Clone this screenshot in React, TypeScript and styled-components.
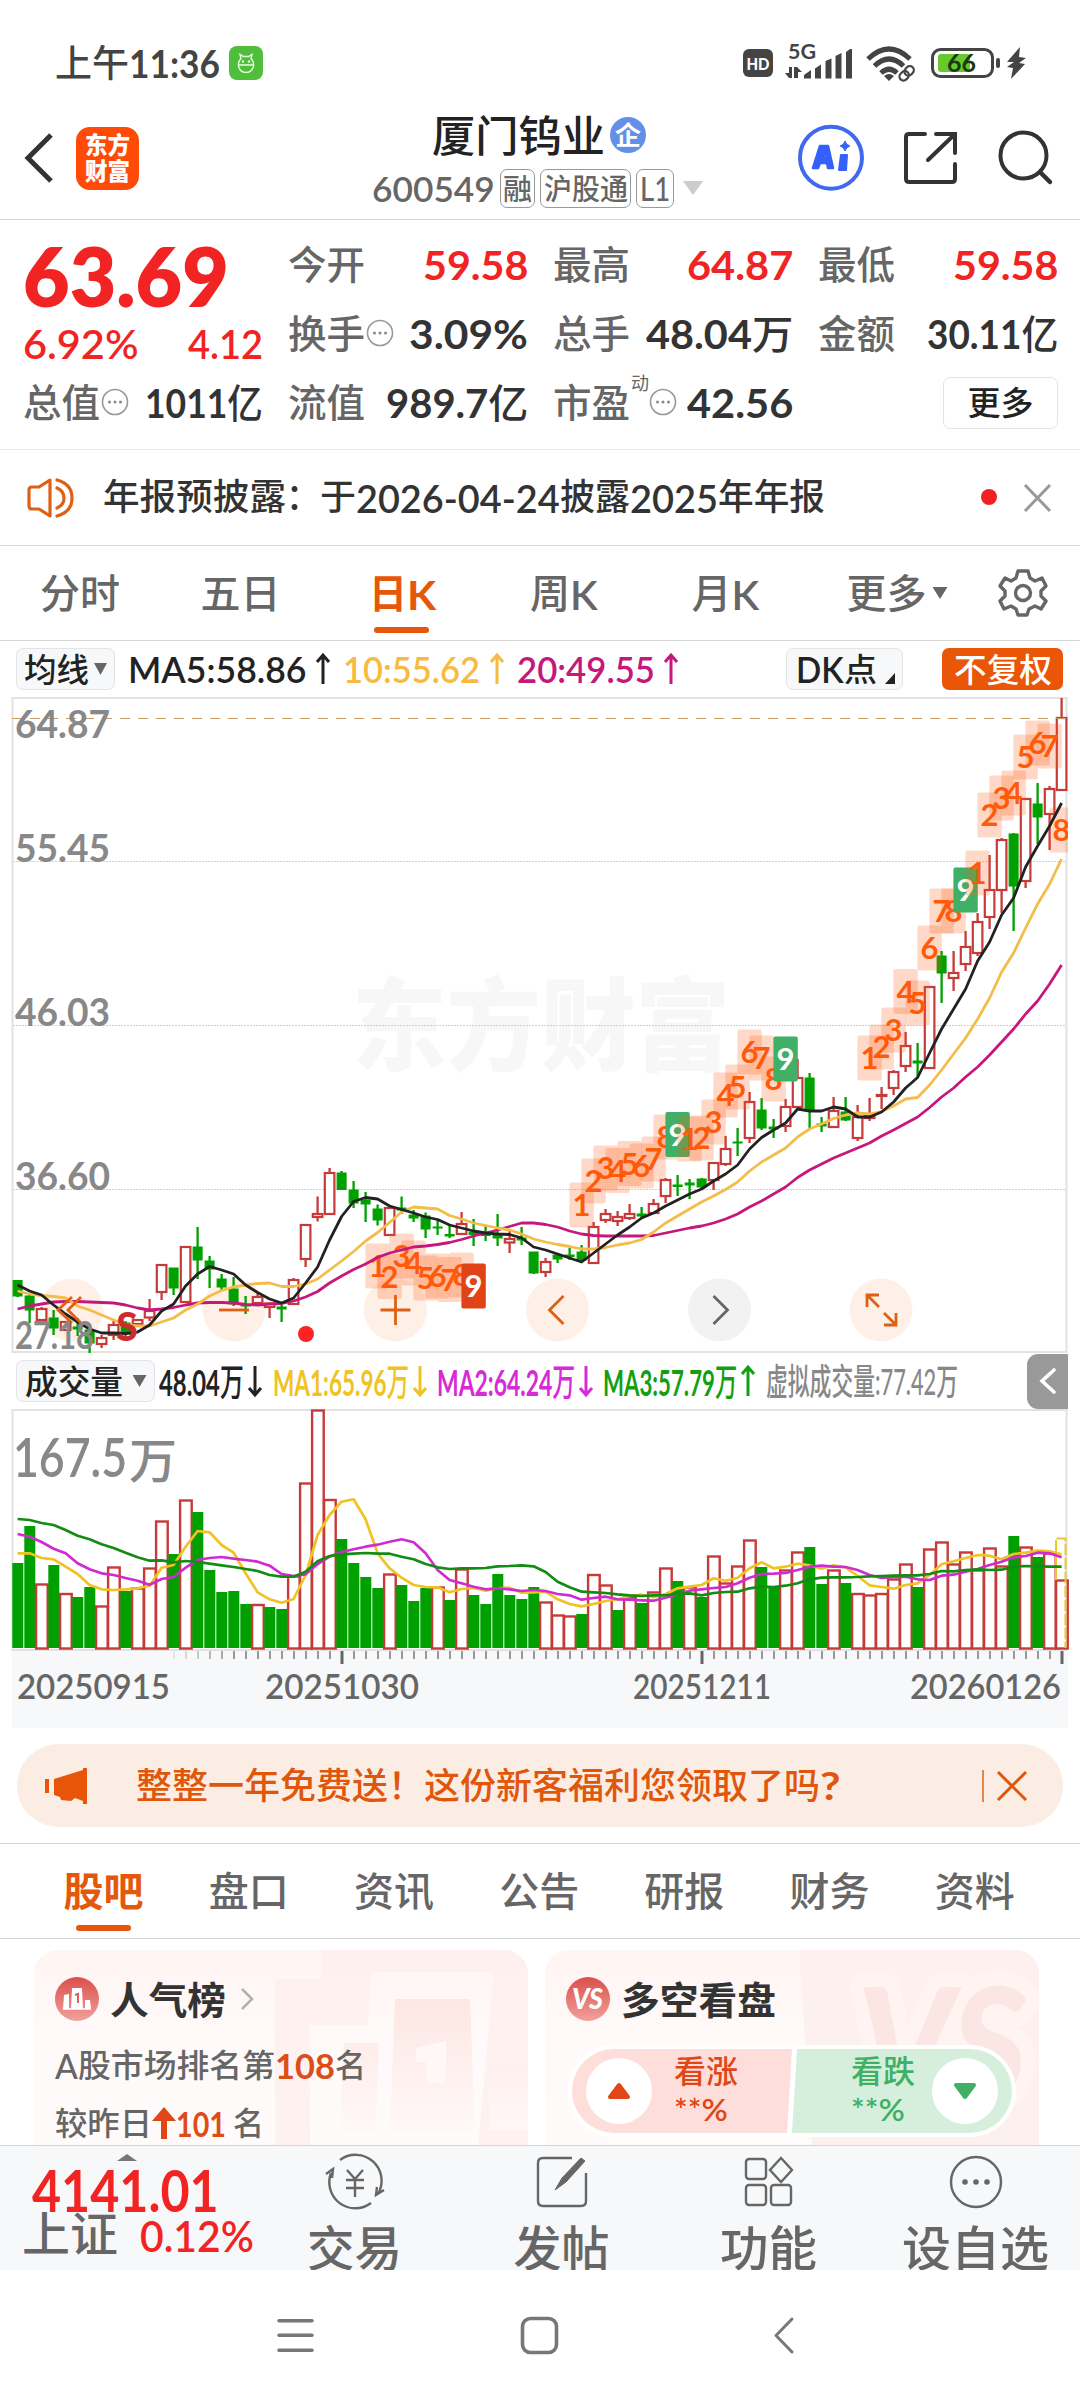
import React, { useLayoutEffect, useRef, useState } from "react";
import styled, { createGlobalStyle } from "styled-components";

const SANS = `Lato, "Noto Sans CJK SC", sans-serif`;

const Global = createGlobalStyle`
  * { box-sizing: border-box; }
  body { margin: 0; background: #fff; font-family: ${SANS}; color: #333; }
  svg { display: block; flex: none; }
`;

/* ---------- text squeezed into a fixed width ---------- */

const FitBox = styled.span<{ $w: number; $size: number; $color?: string; $weight?: number; $y?: number }>`
  display: block;
  flex: none;
  width: ${(p) => p.$w}px;
  height: ${(p) => p.$size}px;
  line-height: ${(p) => p.$size}px;
  font-size: ${(p) => p.$size}px;
  font-weight: ${(p) => p.$weight ?? 500};
  color: ${(p) => p.$color ?? "#333"};
  white-space: nowrap;
  margin-top: ${(p) => p.$y ?? 0}px;
`;
const FitInner = styled.span`
  display: inline-block;
  transform-origin: 0 50%;
`;
const Unit = styled.span`
  font-weight: 500;
`;

type FitProps = { w: number; size: number; color?: string; weight?: number; y?: number; children: React.ReactNode };
function Fit({ w, size, color, weight, y, children }: FitProps) {
  const ref = useRef<HTMLSpanElement>(null);
  const [k, setK] = useState(1);
  useLayoutEffect(() => {
    if (ref.current) setK(w / ref.current.offsetWidth);
  }, [w, size, weight]);
  return (
    <FitBox $w={w} $size={size} $color={color} $weight={weight} $y={y}>
      <FitInner ref={ref} style={{ transform: `scaleX(${k})` }}>
        {children}
      </FitInner>
    </FitBox>
  );
}

/* ---------- page skeleton ---------- */

const Page = styled.main`
  width: 1080px;
  height: 2400px;
  overflow: hidden;
  display: flex;
  flex-direction: column;
  background: #fff;
`;
const Row = styled.div<{ $h: number; $pl?: number; $line?: string }>`
  display: flex;
  align-items: center;
  flex: none;
  height: ${(p) => p.$h}px;
  padding-left: ${(p) => p.$pl ?? 0}px;
  border-bottom: ${(p) => (p.$line ? `1px solid ${p.$line}` : "none")};
`;
const TopRuledRow = styled(Row)`
  border-top: 1px solid #d4d4d4;
`;
const Gap = styled.i<{ $w: number }>`
  flex: none;
  width: ${(p) => p.$w}px;
`;

/* ---------- status bar ---------- */

const StatusBar = styled(Row)`
  padding-top: 26px;
`;

function StatusIcons() {
  return (
    <svg width="292" height="44" viewBox="738 41 292 44" fill="#444">
      <rect x="743" y="49" width="30" height="28" rx="6" />
      <text x="746.5" y="69.5" fontSize="17" fontWeight="900" fill="#fff" textLength="23" lengthAdjust="spacingAndGlyphs">HD</text>
      <text x="788" y="58.5" fontSize="20" fontWeight="700" textLength="28" lengthAdjust="spacingAndGlyphs">5G</text>
      <path d="M789 67h3v11h-3l-4-5h4zM794 78V67h3l5 5h-4v6z" />
      <path d="M804 78.500v-3.500l7-5v8.500zM815 78.500V68.500l6-4v14zM825.500 78.500V61l6-2.500v20zM835.500 78.500V56l6-3v25.500zM846 78.500V52l4-3h2v29.500z" />
      <g fill="none" stroke="#444" strokeWidth="5">
        <path d="M868 59q21-20 42 0M874.500 66q14.500-14 29 0M881 73q8-7.500 16 0" />
      </g>
      <path d="M884 76q5-4 10 0l-5 5z" />
      <g fill="none" stroke="#444" strokeWidth="2.200" transform="rotate(-45 907 73)">
        <rect x="898" y="69" width="10" height="8" rx="4" />
        <rect x="905" y="69" width="10" height="8" rx="4" />
      </g>
      <rect x="932.500" y="49.500" width="60" height="27" rx="8" fill="#fff" stroke="#444" strokeWidth="3" />
      <rect x="938" y="54" width="32" height="18" rx="3" fill="#67c92c" />
      <text x="947" y="72" fontSize="24" fontWeight="700" fill="#1c3a10" textLength="29" lengthAdjust="spacingAndGlyphs">66</text>
      <rect x="996" y="58" width="4" height="10" rx="2" />
      <path d="M1020 47l-13 15h7l-7 5 6 1-2 11 14-15-6-1 7-5-7-1z" />
    </svg>
  );
}

function Mascot() {
  return (
    <svg width="34" height="34" viewBox="0 0 34 34">
      <rect width="34" height="34" rx="8" fill="#4fbe3a" />
      <g fill="none" stroke="#e9ffe2" strokeWidth="1.400">
        <path d="M12 12.500l-1-4 3.500 2h5l3.500-2-1 4q3 3 2.500 8-2 6-7.500 6t-7.500-6q-.5-5 2.500-8zM9.500 19h15" />
      </g>
      <g fill="#e9ffe2"><circle cx="14" cy="15.500" r="1.200" /><circle cx="20" cy="15.500" r="1.200" /></g>
    </svg>
  );
}

/* ---------- title bar ---------- */

const TitleBar = styled(Row)`
  align-items: flex-start;
`;
const Side = styled.div`
  display: flex;
  align-items: center;
  height: 116px;
`;
const Logo = styled.div`
  flex: none;
  width: 63px;
  height: 63px;
  border-radius: 14px;
  background: #ff4a08;
  display: flex;
  flex-direction: column;
  align-items: center;
  justify-content: center;
  gap: 2px;
`;
const TitleBlock = styled.div`
  flex: none;
  width: 340px;
`;
const TitleLine = styled.div<{ $pl: number; $h: number }>`
  display: flex;
  align-items: center;
  height: ${(p) => p.$h}px;
  padding-left: ${(p) => p.$pl}px;
`;
const Verified = styled.div`
  display: grid;
  place-items: center;
  width: 36px;
  height: 36px;
  margin-left: 5px;
  border-radius: 50%;
  background: #6390e6;
`;
const Tag = styled.div<{ $w: number; $ml: number }>`
  display: flex;
  align-items: center;
  justify-content: center;
  width: ${(p) => p.$w}px;
  height: 39px;
  margin-left: ${(p) => p.$ml}px;
  border: 1.5px solid #999;
  border-radius: 7px;
`;
const Down = styled.i<{ $w: number; $h: number; $c: string }>`
  flex: none;
  width: ${(p) => p.$w}px;
  height: ${(p) => p.$h}px;
  background: ${(p) => p.$c};
  clip-path: polygon(0 0, 100% 0, 50% 100%);
`;

function HeaderIcons() {
  return (
    <svg width="262" height="70" viewBox="796 123 262 70" fill="none" stroke="#333" strokeWidth="4">
      <circle cx="831" cy="157.700" r="31" stroke="#4169ef" />
      <g stroke="#3461fb" fill="#3461fb" strokeLinejoin="round">
        <path d="M813 168l7-22h8l5 22h-5l-1-5h-7l-2 5zM822 158h4l-1-6z" strokeWidth="2.500" fillRule="evenodd" />
        <path d="M841 155h6l-1 15h-7z" strokeWidth="2" />
        <path d="M845 141q1 4 5 5-4 1-5 5-1-4-5-5 4-1 5-5z" strokeWidth="1" />
      </g>
      <path d="M925 134h-16q-3 0-3 3v42q0 3 3 3h43q3 0 3-3v-15M936 134h19v19M955 134l-27 26" strokeLinecap="round" />
      <circle cx="1023.500" cy="155.500" r="23" />
      <path d="M1040 172l10 10" strokeWidth="4.500" strokeLinecap="round" />
    </svg>
  );
}

/* ---------- quote block ---------- */

const QuoteGrid = styled.section`
  flex: none;
  height: 230px;
  padding: 10px 22px 0 23px;
  display: grid;
  grid-template-columns: repeat(4, 240px);
  grid-template-rows: repeat(3, 69px);
  column-gap: 25px;
  border-bottom: 1px solid #ebebeb;
`;
const Cell = styled.div`
  display: flex;
  align-items: center;
  justify-content: space-between;
`;
const Label = styled.div`
  display: flex;
  align-items: center;
  gap: 1px;
`;
const PriceCell = styled.div`
  grid-row: span 2;
  padding-top: 4px;
`;
const PriceSub = styled.div`
  display: flex;
  justify-content: space-between;
  margin-top: 8px;
`;
const MoreButton = styled.div`
  display: grid;
  place-items: center;
  width: 115px;
  height: 52px;
  margin-left: auto;
  border: 1.5px solid #e4e4e6;
  border-radius: 7px;
`;
const SupMark = styled.span`
  font-size: 18px;
  color: #666;
  align-self: flex-start;
  line-height: 18px;
  margin: -9px -1px 0 0;
`;
const Dots = () => (
  <svg width="28" height="30" viewBox="0 0 28 30">
    <circle cx="14" cy="14" r="12.500" fill="none" stroke="#999" strokeWidth="1.600" />
    <g fill="#888"><circle cx="8.500" cy="14" r="1.500" /><circle cx="14" cy="14" r="1.500" /><circle cx="19.500" cy="14" r="1.500" /></g>
  </svg>
);

const RED = "#f12323";

function Stat({ name, value, unit, w, color, dots, sup }: { name: string; value: string; unit?: string; w: number; color?: string; dots?: boolean; sup?: string }) {
  return (
    <Cell>
      <Label>
        <Fit w={77} size={39} color="#666">{name}</Fit>
        {sup && <SupMark>{sup}</SupMark>}
        {dots && <Dots />}
      </Label>
      <Fit w={w} size={40} color={color} weight={700}>{value}{unit && <Unit>{unit}</Unit>}</Fit>
    </Cell>
  );
}

/* ---------- tabs ---------- */

const TabItem = styled.div<{ $w: number; $gap?: number }>`
  position: relative;
  flex: none;
  width: ${(p) => p.$w}px;
  height: 100%;
  display: flex;
  align-items: center;
  justify-content: center;
  gap: ${(p) => p.$gap ?? 0}px;
`;
const Underline = styled.i`
  position: absolute;
  left: 50%;
  bottom: 7px;
  width: 55px;
  height: 6px;
  margin-left: -28px;
  border-radius: 3px;
  background: #e5580b;
`;

const Gear = () => (
  <svg width="50" height="50" viewBox="-25 -25 50 50" fill="none" stroke="#666" strokeWidth="3.400" strokeLinejoin="round">
    <path d="M-5-22H5L7-15 12-12 19-15 23-7 18-2V3L23 8 18 16 12 13 6 16 4 22H-5L-7 16-12 13-19 16-23 8-18 3V-2L-23-7-18-15-12-12-7-15Z" />
    <circle r="7.500" />
  </svg>
);

/* ---------- chart legends ---------- */

const Chip = styled.div<{ $w: number; $solid?: boolean; $gap?: number }>`
  flex: none;
  display: flex;
  align-items: center;
  justify-content: center;
  gap: ${(p) => p.$gap ?? 5}px;
  width: ${(p) => p.$w}px;
  height: 42px;
  border-radius: 7px;
  border: ${(p) => (p.$solid ? "none" : "1.5px solid #e2e4e8")};
  background: ${(p) => (p.$solid ? "#e95607" : "#f7f8fa")};
`;
const Corner = styled.i`
  align-self: flex-end;
  width: 10px;
  height: 11px;
  margin: 0 -2px 5px 8px;
  background: #222;
  clip-path: polygon(100% 0, 100% 100%, 0 100%);
`;
const CollapseTab = styled.div`
  display: grid;
  place-items: center;
  width: 41px;
  height: 55px;
  margin-left: auto;
  border-radius: 11px 0 0 11px;
  background: #999;
`;
const Arrow = ({ color, down }: { color: string; down?: boolean }) => (
  <svg width="16" height="34" viewBox="0 0 16 34" fill="none" stroke={color} strokeWidth="3">
    <path d={down ? "M8 2V31M2 24l6 7 6-7" : "M8 32V3M2 10l6-7 6 7"} />
  </svg>
);

/* ---------- chart data ---------- */

const X = (i: number) => 17.6 + 12 * i;
const UP = "#c63a3a";
const DN = "#00a000";

// direction, body top, body bottom, high, low
type Candle = [0 | 1, number, number, number, number];
const CANDLES: Candle[] = [
  [0, 1280.5, 1296, 1280, 1297], [0, 1296, 1310, 1295, 1323], [1, 1309, 1320, 1307, 1323], [0, 1318, 1328, 1310, 1335],
  [1, 1322, 1330, 1322, 1330], [0, 1327, 1329, 1318, 1336], [0, 1330, 1343, 1326, 1353], [1, 1338, 1344, 1335, 1348],
  [1, 1325, 1335, 1321, 1340], [0, 1323, 1334, 1321, 1336], [1, 1320, 1324, 1319, 1326], [1, 1311, 1317.5, 1299, 1321],
  [1, 1265, 1292, 1265, 1300], [0, 1268, 1288, 1268, 1295], [1, 1247, 1302, 1247, 1303], [0, 1247, 1260, 1227, 1279],
  [0, 1261, 1269, 1256, 1288], [0, 1279, 1287, 1274, 1290], [0, 1289, 1304, 1277, 1306], [0, 1305, 1306, 1296, 1314],
  [1, 1297, 1303, 1292, 1305], [1, 1303.5, 1307, 1303, 1318], [0, 1307, 1309, 1304, 1322], [1, 1280, 1304, 1278, 1304],
  [1, 1225, 1259, 1225, 1267], [1, 1214, 1217, 1196.5, 1221.5], [1, 1173, 1214, 1168, 1214], [0, 1173, 1189.5, 1171, 1189],
  [0, 1190, 1203, 1181, 1208], [0, 1200, 1204, 1192, 1222], [0, 1209, 1220, 1204.5, 1225.5], [1, 1208, 1235, 1208, 1235],
  [0, 1208, 1210, 1196.5, 1214], [0, 1215, 1218, 1210, 1222], [0, 1216, 1229, 1212.5, 1238], [0, 1227, 1228, 1220, 1235],
  [0, 1234.5, 1236, 1225.5, 1238], [1, 1224, 1234, 1212, 1234], [0, 1232, 1234.5, 1219, 1246], [0, 1233.5, 1235.5, 1225.5, 1241],
  [0, 1233.5, 1238, 1214, 1246], [1, 1239, 1242.5, 1230, 1253], [0, 1238, 1240, 1227, 1245], [0, 1252, 1273, 1252, 1274],
  [1, 1262, 1272, 1258, 1277], [0, 1255, 1259, 1253, 1263], [0, 1255, 1256.5, 1248, 1260], [0, 1252, 1260, 1245, 1262],
  [1, 1227, 1263, 1222, 1264], [1, 1214, 1220, 1209, 1223], [1, 1217, 1221, 1211, 1226], [1, 1214, 1218, 1204, 1220],
  [0, 1214, 1216, 1207, 1218], [1, 1204, 1213, 1199, 1214], [1, 1180, 1196, 1178, 1203], [0, 1185, 1186.5, 1175, 1196],
  [0, 1183, 1185, 1179, 1199], [0, 1179, 1187, 1178, 1190], [1, 1163, 1180, 1162, 1190], [1, 1149, 1164, 1136, 1166],
  [0, 1142, 1143, 1128, 1156], [1, 1102, 1138, 1092, 1143], [0, 1110, 1128, 1098, 1130], [0, 1127, 1129, 1119, 1138],
  [1, 1107, 1126, 1099, 1132], [1, 1078, 1107, 1059, 1108], [0, 1078, 1110, 1073, 1130], [0, 1124, 1126, 1117, 1132],
  [1, 1111, 1127, 1097, 1127], [0, 1112, 1120, 1097, 1121], [1, 1117, 1138, 1105, 1141], [1, 1116, 1118, 1098, 1121],
  [1, 1095, 1096, 1087, 1109], [1, 1072, 1088, 1070, 1095], [1, 1046, 1066, 1032, 1072], [0, 1061, 1063, 1043, 1077],
  [1, 987, 1068, 987, 1068], [0, 956, 973, 951, 1003], [1, 973, 978, 951, 991], [1, 947, 964, 931, 971],
  [1, 922, 953, 913, 956], [1, 890, 917, 855, 929], [1, 840, 890, 838, 913], [0, 834, 886, 833, 931],
  [1, 799, 881, 798, 888], [0, 804, 817, 783, 844], [1, 789, 814, 786, 850], [1, 718, 790, 698, 790],
];

const MA5 = [1285, 1291, 1295, 1305, 1314, 1322, 1329, 1333, 1333, 1333.5, 1332, 1325, 1311, 1304, 1286, 1274, 1266.5, 1270, 1274, 1285, 1292.5, 1299, 1303, 1298, 1283, 1267, 1240, 1216.5, 1201.5, 1197.5, 1199, 1206, 1209.5, 1213, 1217, 1219.5, 1225, 1228, 1231, 1233, 1234, 1234.5, 1238, 1247, 1250, 1254, 1258, 1262, 1253, 1244, 1235, 1227, 1218, 1213, 1206, 1200, 1194, 1189, 1181, 1174, 1165, 1149, 1137.5, 1130, 1123, 1109, 1111, 1111, 1107, 1109, 1117, 1117, 1112, 1102, 1088, 1077.5, 1053, 1029, 1009, 989, 961, 942, 915, 898, 867, 846, 826, 803];
const MA10 = [1291, 1294, 1295.5, 1296.5, 1298, 1306, 1310, 1315, 1320, 1325, 1326, 1326, 1322, 1318, 1310, 1304, 1296, 1290.5, 1287, 1285, 1283.5, 1283, 1286.5, 1286.5, 1284, 1279, 1270, 1261, 1251.5, 1241, 1232.5, 1222.5, 1212, 1207, 1208, 1209, 1215.5, 1219, 1223, 1225.5, 1228, 1230, 1234, 1239, 1242, 1244.5, 1246.5, 1249, 1249, 1247.5, 1245, 1243, 1239.5, 1232, 1223, 1216, 1209, 1202, 1196, 1189.5, 1182, 1171, 1162, 1155, 1148, 1137, 1129, 1124, 1118.5, 1115, 1113, 1114, 1111.5, 1106, 1099, 1097.5, 1085, 1070, 1054, 1038, 1019, 998, 972, 953, 928, 904, 884, 859];
const MA20 = [1309, 1306, 1304, 1302, 1301.5, 1301.5, 1302, 1302.5, 1303, 1305, 1308, 1310, 1309, 1307.5, 1305, 1303, 1302.5, 1302.5, 1303, 1304.5, 1305, 1304, 1303.5, 1301, 1297, 1291.5, 1283, 1276, 1269.5, 1264, 1257.5, 1253, 1250, 1247, 1246, 1244.5, 1242.5, 1239.5, 1236, 1233, 1230, 1226.5, 1223, 1223, 1224.5, 1227, 1231, 1234, 1235.5, 1236, 1236, 1236, 1236, 1235.5, 1233, 1230.5, 1228, 1226, 1223, 1219, 1214, 1207, 1201, 1194, 1187, 1177.5, 1170, 1164, 1158, 1153, 1148, 1143, 1136, 1130, 1123.5, 1117, 1107.5, 1097, 1088, 1077, 1067, 1055, 1042, 1029, 1014, 1001, 984, 965];

// candle index, centre height, count; the ninth is a filled flag
const COUNTS: [number, number, number, string?][] = [
  [30, 1266, 1], [31, 1276.5, 2], [32, 1256, 3], [33, 1263, 4], [34, 1278, 5], [35, 1276, 6], [36, 1279.5, 7], [37, 1275, 8], [38, 1286, 9, "#e04416"],
  [47, 1205, 1], [48, 1181, 2], [49, 1168, 3], [50, 1170.5, 4], [51, 1163.5, 5], [52, 1166, 6], [53, 1159, 7], [54, 1137, 8], [55, 1134.5, 9, "#3fb065"],
  [56, 1139, 1], [57, 1138, 2], [58, 1122, 3], [59, 1095, 4], [60, 1087, 5], [61, 1052, 6], [62, 1058, 7], [63, 1079, 8], [64, 1059, 9, "#3fb065"],
  [71, 1058, 1], [72, 1047, 2], [73, 1030, 3], [74, 991.5, 4], [75, 1003, 5], [76, 948, 6], [77, 911, 7], [78, 911, 8], [79, 890, 9, "#3fb065"],
  [80, 873, 1], [81, 815, 2], [82, 798, 3], [83, 793, 4], [84, 757, 5], [85, 743, 6], [86, 746, 7], [87, 830, 8],
];

const VOL = [1563, 1526, 1584, 1565, 1593.5, 1597, 1587, 1606, 1567, 1591, 1588, 1568, 1521, 1554, 1500, 1512, 1570, 1592, 1591, 1604, 1604.5, 1607, 1609, 1576, 1483, 1410, 1499.5, 1539, 1563, 1577, 1588, 1574, 1585, 1601, 1588, 1587, 1600, 1569, 1595, 1604, 1574, 1595, 1599, 1587, 1602, 1615, 1616, 1614, 1574.5, 1585, 1610, 1597, 1603, 1592, 1568, 1581, 1587, 1597, 1556, 1583, 1566, 1540, 1567, 1586, 1570, 1552, 1547, 1584, 1570, 1583, 1593.5, 1595, 1593.5, 1579, 1564, 1587, 1549, 1542, 1564, 1552, 1570, 1548, 1566, 1536, 1547, 1557, 1553, 1580];
const VOL_UP = new Set([2, 4, 7, 8, 10, 11, 12, 14, 20, 23, 24, 25, 26, 31, 35, 37, 44, 45, 46, 48, 49, 51, 53, 54, 56, 58, 59, 60, 61, 64, 65, 68, 70, 71, 72, 73, 74, 76, 77, 78, 79, 80, 81, 82, 84, 86, 87]);

// volume averages, in thirds of a pixel below y = 1340
const V1 = [640, 640, 654, 658, 680, 702, 735, 748, 750, 748, 745, 737, 683, 675, 620, 573, 577, 615, 638, 700, 757, 778, 788, 777, 705, 585, 525, 485, 478, 538, 640, 685, 713, 735, 741, 742, 757, 747, 744, 752, 745, 743, 758, 757, 755, 778, 792, 799, 792, 783, 778, 768, 764, 772, 762, 745, 740, 735, 715, 722, 713, 685, 667, 685, 680, 671, 676, 686, 676, 682, 708, 736, 741, 746, 735, 730, 705, 673, 664, 654, 645, 647, 658, 642, 638, 632, 634, 643];
const V2 = [582, 590, 606, 626, 640, 670, 688, 700, 705, 714, 722, 734, 717, 711, 683, 660, 654, 651, 656, 660, 665, 677, 702, 708, 703, 672, 650, 636, 628, 620, 614, 605, 598, 607, 640, 690, 720, 730, 740, 748, 745, 748, 753, 750, 753, 762, 766, 779, 774, 770, 778, 779, 781, 782, 773, 763, 752, 748, 744, 741, 730, 713, 702, 701, 699, 690, 680, 677, 680, 681, 690, 705, 714, 711, 710, 718, 720, 707, 704, 695, 687, 675, 665, 652, 648, 638, 640, 652];
const V3 = [537, 540, 549, 555, 570, 587, 598, 613, 624, 638, 652, 662, 661, 667, 663, 666, 671, 676, 681, 687, 693, 705, 710, 710, 695, 664, 648, 643, 641, 639, 641, 641, 650, 658, 672, 682, 687, 685, 685, 684, 679, 678, 676, 679, 696, 725, 742, 755, 757, 759, 763, 766, 768, 766, 766, 761, 760, 766, 759, 756, 755, 745, 740, 741, 737, 730, 718, 713, 712, 712, 711, 709, 708, 707, 706, 706, 702, 693, 694, 690, 688, 690, 689, 680, 678, 679, 680, 680];

const pts = (ys: number[]) => ys.map((y, i) => `${X(i).toFixed(1)},${y}`).join(" ");
const vpts = (ys: number[]) => pts(ys.map((v) => +(1340 + v / 3).toFixed(1)));

const PRICES: [string, number][] = [["64.87", 737.5], ["55.45", 862], ["46.03", 1026], ["36.60", 1189.5], ["27.18", 1349]];
const BUTTONS: [number, string, string, string][] = [
  [72, "#fff0e7", "#dd6014", "M0-13-14 0 0 13M9-13-4 0 9 13"],
  [234, "#fff0e7", "#dd6014", "M-15 0H15"],
  [395.500, "#fff0e7", "#dd6014", "M-15 0H15M0-15V15"],
  [557.500, "#fff0e7", "#dd6014", "M6-14-8 0 6 14"],
  [719.500, "#f2f2f2", "#666", "M-6-14 8 0-6 14"],
  [881, "#fff0e7", "#dd6014", "M-2-3-14-15M-14-3V-15H-2M3 3 15 15M15 3V15H3"],
];

function PriceChart() {
  return (
    <svg width="1080" height="656" viewBox="0 697 1080 656" fontFamily={SANS}>
      <path d="M12.500 1352V698H1066.500V1352Z" fill="none" stroke="#e2e2e2" strokeWidth="2" />
      <text x="352" y="1063" fontSize="101" fontWeight="900" fill="#f7f7f7" textLength="378" lengthAdjust="spacingAndGlyphs">东方财富</text>
      {[861, 1025, 1189].map((y) => (
        <path key={y} d={`M13 ${y}.5H1066`} stroke="#d0d0d0" strokeDasharray="2 1" strokeWidth="1" />
      ))}
      {BUTTONS.map(([x, bg]) => <circle key={x} cx={x} cy="1310" r="31.500" fill={bg} />)}
      {CANDLES.map(([up, t, b, h, l], i) => {
        const c = up ? UP : DN;
        const x = X(i);
        return (
          <g key={i} stroke={c} strokeWidth="2.300">
            <path d={`M${x} ${h}V${t}M${x} ${b}V${l}`} />
            <rect x={x - (up ? 4.8 : 4.5)} y={t} width={up ? 9.6 : 9} height={Math.max(b - t, 0.5)} fill={up ? "#fff" : DN} strokeWidth={up ? 2.2 : 1} />
          </g>
        );
      })}
      <path d="M12 718.500H1066" stroke="#c59a66" strokeWidth="1.200" strokeDasharray="10 8" />
      <clipPath id="plot"><rect x="12" y="697" width="1056" height="656" /></clipPath>
      <g clipPath="url(#plot)" fontSize="31" fontWeight="700" textAnchor="middle">
        {COUNTS.map(([i, y, n, flag]) => (
          <g key={i}>
            <rect x={X(i) - 12.2} y={y - 22.5} width="24.400" height="45" rx="2" fill={flag ?? "#ff5a14"} fillOpacity={flag ? 1 : 0.24} />
            <text x={X(i)} y={y + 11.2} fill={flag ? "#fff" : "#ff5a0a"}>{n}</text>
          </g>
        ))}
      </g>
      <g fill="none" strokeWidth="2.800" strokeLinejoin="round">
        <polyline points={pts(MA20)} stroke="#c6177d" />
        <polyline points={pts(MA10)} stroke="#f2bd49" />
        <polyline points={pts(MA5)} stroke="#222" />
      </g>
      {BUTTONS.map(([x, , c, d]) => <path key={x} d={d} transform={`translate(${x} 1310)`} fill="none" stroke={c} strokeWidth="2.800" />)}
      {PRICES.map(([t, y]) => (
        <text key={t} x="15" y={y} fontSize="38" fontWeight="700" fill="#888" textLength={t === "27.18" ? 79 : 95} lengthAdjust="spacingAndGlyphs">{t}</text>
      ))}
      <text x="127" y="1341" fontSize="39" fontWeight="900" fill="#cc2c2c" textAnchor="middle">S</text>
      <circle cx="306" cy="1334" r="8" fill="#f22" />
    </svg>
  );
}

function VolumeChart() {
  return (
    <svg width="1080" height="319" viewBox="0 1409 1080 319" fontFamily={SANS}>
      <path d="M12.500 1650V1410H1066.500V1650Z" fill="none" stroke="#e2e2e2" strokeWidth="2" />
      <rect x="12" y="1651" width="1056" height="77" fill="#f7f8fa" />
      <g fill="#888" fontWeight="600" fontSize="53">
        <text x="13" y="1477" textLength="114" lengthAdjust="spacingAndGlyphs">167.5</text>
        <text x="129" y="1478" fontSize="48" fontWeight="500" textLength="48">万</text>
      </g>
      {VOL.map((y, i) => {
        const up = VOL_UP.has(i);
        return up ? (
          <rect key={i} x={X(i) - 5.5} y={y + 0.5} width="11.600" height={1648 - y} fill="#fff" stroke={UP} strokeWidth="2.400" />
        ) : (
          <rect key={i} x={X(i) - 5.3} y={y} width="11" height={1648 - y} fill={DN} />
        );
      })}
      <path d="M1056 1580V1538.500H1065.500V1648" fill="none" stroke="#edc52b" strokeWidth="2" strokeDasharray="12 2" />
      <g fill="none" strokeWidth="2.700" strokeLinejoin="round">
        <polyline points={vpts(V1)} stroke="#f0c222" />
        <polyline points={vpts(V2)} stroke="#d02bd0" />
        <polyline points={vpts(V3)} stroke="#128c12" />
      </g>
      {VOL.map((_, i) =>
        i < 13 ? null : (
          <path key={i} d={`M${X(i) + 0.4} 1651v${i % 30 === 27 ? 13 : 8}`} stroke={i % 30 === 27 ? "#666" : "#999"} strokeWidth={i % 30 === 27 ? 3 : 2} opacity={i < 18 ? (i - 12) / 6 : 1} />
        )
      )}
      <g fill="#666" fontSize="35" fontWeight="600">
        <text x="17" y="1699" textLength="153" lengthAdjust="spacingAndGlyphs">20250915</text>
        <text x="265" y="1699" textLength="154" lengthAdjust="spacingAndGlyphs">20251030</text>
        <text x="633" y="1699" textLength="138" lengthAdjust="spacingAndGlyphs">20251211</text>
        <text x="910" y="1699" textLength="151" lengthAdjust="spacingAndGlyphs">20260126</text>
      </g>
    </svg>
  );
}

/* ---------- promo ---------- */

const Promo = styled.section`
  flex: none;
  display: flex;
  align-items: center;
  width: 1046px;
  height: 83px;
  margin: 16px 0 16px 17px;
  padding-left: 27px;
  border-radius: 42px;
  background: #fcede4;
`;

/* ---------- cards ---------- */

const Cards = styled.section`
  flex: none;
  display: flex;
  gap: 17px;
  height: 206px;
  padding: 11px 0 0 34px;
  overflow: hidden;
`;
const Card = styled.article`
  position: relative;
  flex: none;
  width: 494px;
  height: 240px;
  padding: 25px 0 0 21px;
  border-radius: 24px;
  overflow: hidden;
  background: linear-gradient(#fff5f3, #fffafa 40%, #fffbfa);
`;
const CardArt = styled.svg`
  position: absolute;
  left: 0;
  top: 0;
`;
const CardBody = styled.div`
  position: relative;
`;
const CardLine = styled.div<{ $h: number; $pl?: number }>`
  display: flex;
  align-items: center;
  height: ${(p) => p.$h}px;
  padding-left: ${(p) => p.$pl ?? 0}px;
`;
const Vote = styled.div`
  display: flex;
  width: 448px;
  height: 92px;
  margin: 22px 0 0 2px;
  padding: 4px;
  border-radius: 46px;
  background: #fff;
`;
const VoteHalf = styled.div<{ $bg: string; $right?: boolean }>`
  flex: 1;
  display: flex;
  flex-direction: ${(p) => (p.$right ? "row-reverse" : "row")};
  align-items: center;
  padding: 0 14px;
  gap: ${(p) => (p.$right ? 17 : 22)}px;
  border-radius: ${(p) => (p.$right ? "0 43px 43px 0" : "43px 0 0 43px")};
  background: ${(p) => p.$bg};
  clip-path: ${(p) => (p.$right ? "polygon(5px 0, 100% 0, 100% 100%, 0 100%)" : "polygon(0 0, 100% 0, calc(100% - 5px) 100%, 0 100%)")};
`;
const VoteCircle = styled.div`
  display: grid;
  place-items: center;
  width: 66px;
  height: 66px;
  flex: none;
  border-radius: 50%;
  background: #fff;
`;
const VoteText = styled.div`
  display: flex;
  flex-direction: column;
  gap: 7px;
  margin-top: -4px;
`;

const RankIcon = () => (
  <svg width="44" height="44" viewBox="0 0 44 44">
    <defs><linearGradient id="rk" x2="0" y2="1"><stop stopColor="#d9504c" /><stop offset="1" stopColor="#f2a09b" /></linearGradient></defs>
    <circle cx="22" cy="22" r="22" fill="url(#rk)" />
    <path d="M9 18l5-1v15H8zM17 11h10l1 21H16zM30 23h5l1 9h-6z" fill="#fff" />
    <path d="M20 18l3-1v9" fill="none" stroke="#d9605c" strokeWidth="2" />
    <path d="M8 32H36" stroke="#fff" strokeWidth="1.500" />
  </svg>
);
const VsIcon = () => (
  <svg width="44" height="44" viewBox="0 0 44 44" fontFamily={SANS}>
    <circle cx="22" cy="22" r="22" fill="url(#rk)" />
    <text x="6" y="32" fontSize="28" fontWeight="900" fontStyle="italic" fill="#fff" textLength="31" lengthAdjust="spacingAndGlyphs">VS</text>
  </svg>
);

/* ---------- bottom bars ---------- */

const BottomBar = styled.nav`
  flex: none;
  display: flex;
  height: 125px;
  overflow: hidden;
  border-top: 1.5px solid #d4d6d9;
  background: #f7f8fa;
`;
const IndexCell = styled.div`
  flex: none;
  width: 251px;
  padding: 8px 0 0 22px;
`;
const IndexRow = styled.div<{ $pl: number; $mt?: number }>`
  display: flex;
  align-items: center;
  margin-top: ${(p) => p.$mt ?? 0}px;
  padding-left: ${(p) => p.$pl}px;
`;
const UpMark = styled.i`
  display: block;
  width: 20px;
  height: 7px;
  margin-left: 95px;
  background: #777;
  clip-path: polygon(50% 0, 100% 100%, 0 100%);
`;
const NavItem = styled.div`
  flex: none;
  width: 207px;
  padding-top: 7px;
  display: flex;
  flex-direction: column;
  align-items: center;
  gap: 13px;
`;

const NAV: [string, number, React.ReactNode][] = [
  ["交易", 95, <g key="t"><path d="M-15-22A26 26 0 0 1 23 12M16 21A26 26 0 0 1-24-9M-29-8l7-5-1 9M29 8l-8 5 1-8" /><path d="M-8-12 0-3 8-12M0-3V15M-9-2H9M-9 6H9" /></g>],
  ["发帖", 96, <g key="p"><path d="M10-24H-19q-5 0-5 5V19q0 5 5 5H19q5 0 5-5V-9" /><path d="M-7 8 0-4 19-24l4 3L4 0Z" fill="#666" strokeWidth="1" /></g>],
  ["功能", 97, <g key="f"><rect x="-23" y="-23" width="20" height="20" rx="3" /><rect x="-23" y="3" width="20" height="20" rx="3" /><rect x="2" y="3" width="20" height="20" rx="3" /><path d="M12-24 23-12 12 0 1-12Z" /></g>],
  ["设自选", 147, <g key="m"><circle r="25" /><g fill="#666" stroke="none"><circle cx="-11" r="2.800" /><circle r="2.800" /><circle cx="11" r="2.800" /></g></g>],
];

const SystemBar = styled.footer`
  flex: none;
  height: 130px;
  display: flex;
  align-items: center;
`;

export default function App() {
  return (
    <Page>
      <Global />

      <StatusBar $h={100} $pl={55}>
        <Fit w={74} size={37} color="#444" y={-2}>上午</Fit>
        <Fit w={91} size={38} color="#444" weight={700}>11:36</Fit>
        <Gap $w={9} />
        <Mascot />
        <Gap $w={475} />
        <StatusIcons />
      </StatusBar>

      <TitleBar $h={120} $pl={22} $line="#d8d8d8">
        <Side>
          <svg width="34" height="54" viewBox="0 0 34 54" fill="none" stroke="#333" strokeWidth="5">
            <path d="M29 4 6 27 29 50" />
          </svg>
          <Gap $w={20} />
          <Logo>
            <Fit w={45} size={24} color="#fff" weight={900}>东方</Fit>
            <Fit w={45} size={24} color="#fff" weight={900}>财富</Fit>
          </Logo>
          <Gap $w={233} />
        </Side>
        <TitleBlock>
          <TitleLine $pl={60} $h={70}>
            <Fit w={173} size={43} color="#222">厦门钨业</Fit>
            <Verified><Fit w={26} size={26} color="#fff" weight={700}>企</Fit></Verified>
          </TitleLine>
          <TitleLine $pl={0} $h={36}>
            <Fit w={123} size={35} color="#666" weight={600}>600549</Fit>
            <Tag $w={35} $ml={5}><Fit w={29} size={29} color="#666">融</Fit></Tag>
            <Tag $w={91} $ml={5}><Fit w={84} size={29} color="#666">沪股通</Fit></Tag>
            <Tag $w={38} $ml={5}><Fit w={30} size={33} color="#666">L1</Fit></Tag>
            <Gap $w={9} />
            <Down $w={20} $h={14} $c="#ccc" />
          </TitleLine>
        </TitleBlock>
        <Gap $w={84} />
        <Side><HeaderIcons /></Side>
      </TitleBar>

      <QuoteGrid>
        <PriceCell>
          <Fit w={206} size={82} color={RED} weight={800}>63.69</Fit>
          <PriceSub>
            <Fit w={116} size={40} color={RED} weight={600}>6.92%</Fit>
            <Fit w={75} size={40} color={RED} weight={600}>4.12</Fit>
          </PriceSub>
        </PriceCell>
        <Stat name="今开" value="59.58" w={105} color={RED} />
        <Stat name="最高" value="64.87" w={106} color={RED} />
        <Stat name="最低" value="59.58" w={105} color={RED} />
        <Stat name="换手" value="3.09%" w={119} dots />
        <Stat name="总手" value="48.04" unit="万" w={147} />
        <Stat name="金额" value="30.11" unit="亿" w={131} />
        <Stat name="总值" value="1011" unit="亿" w={118} dots />
        <Stat name="流值" value="989.7" unit="亿" w={142} />
        <Stat name="市盈" sup="动" value="42.56" w={106} dots />
        <Cell><MoreButton><Fit w={66} size={33} color="#222">更多</Fit></MoreButton></Cell>
      </QuoteGrid>

      <Row $h={96} $pl={26} $line="#d8d8d8">
        <svg width="50" height="44" viewBox="0 0 50 44" fill="none" stroke="#df6012" strokeWidth="3.200" strokeLinecap="round" strokeLinejoin="round">
          <path d="M24 4 13 11H6q-3 0-3 3V30q0 3 3 3H13L24 40Z" />
          <path d="M31 4q15 4 15 18T31 40M31 12q7 3 7 10t-7 10" />
        </svg>
        <Gap $w={27} />
        <Fit w={183} size={36} y={-3}>年报预披露</Fit>
        <Fit w={34} size={36} y={-3}>：</Fit>
        <Fit w={36} size={36} y={-3}>于</Fit>
        <Fit w={204} size={38} weight={600} y={1}>2026-04-24</Fit>
        <Fit w={70} size={36} y={-3}>披露</Fit>
        <Fit w={88} size={38} weight={600} y={1}>2025</Fit>
        <Fit w={107} size={36} y={-3}>年年报</Fit>
        <Gap $w={155} />
        <svg width="76" height="32" viewBox="0 0 76 32">
          <circle cx="9" cy="15" r="8" fill="#f22222" />
          <path d="M45 3 70 29M70 3 45 29" stroke="#999" strokeWidth="3" />
        </svg>
      </Row>

      <Row $h={95} $line="#d8d8d8">
        <TabItem $w={160}><Fit w={80} size={40} color="#666">分时</Fit></TabItem>
        <TabItem $w={161}><Fit w={80} size={40} color="#666">五日</Fit></TabItem>
        <TabItem $w={162}><Fit w={38} size={40} color="#e5580b" weight={700}>日</Fit><Fit w={29} size={41} color="#e5580b" weight={700} y={2}>K</Fit><Underline /></TabItem>
        <TabItem $w={162}><Fit w={40} size={40} color="#666">周</Fit><Fit w={28} size={41} color="#666" weight={600} y={2}>K</Fit></TabItem>
        <TabItem $w={161}><Fit w={40} size={40} color="#666">月</Fit><Fit w={28} size={41} color="#666" weight={600} y={2}>K</Fit></TabItem>
        <TabItem $w={182} $gap={6}><Fit w={80} size={40} color="#666">更多</Fit><Down $w={15} $h={12} $c="#666" /></TabItem>
        <Gap $w={10} />
        <Gear />
      </Row>

      <Row $h={56} $pl={16}>
        <Chip $w={99}><Fit w={65} size={33} color="#222">均线</Fit><Down $w={13} $h={12} $c="#666" /></Chip>
        <Gap $w={13} />
        <Fit w={179} size={36} color="#222" weight={600}>MA5:58.86</Fit>
        <Gap $w={8} /><Arrow color="#222" /><Gap $w={12} />
        <Fit w={137} size={36} color="#f7bb42" weight={600}>10:55.62</Fit>
        <Gap $w={9} /><Arrow color="#f7bb42" /><Gap $w={12} />
        <Fit w={138} size={36} color="#c6177d" weight={600}>20:49.55</Fit>
        <Gap $w={8} /><Arrow color="#c6177d" />
        <Gap $w={107} />
        <Chip $w={117} $gap={0}><Fit w={48} size={36} color="#222" weight={600}>DK</Fit><Fit w={33} size={32} color="#222">点</Fit><Corner /></Chip>
        <Gap $w={39} />
        <Chip $w={121} $solid><Fit w={98} size={33} color="#fff">不复权</Fit></Chip>
      </Row>

      <PriceChart />

      <Row $h={56} $pl={16}>
        <Chip $w={139} $gap={10}><Fit w={98} size={33} color="#222">成交量</Fit><Down $w={14} $h={12} $c="#666" /></Chip>
        <Gap $w={4} />
        <Fit w={85} size={37} color="#222" weight={700}>48.04<Unit>万</Unit></Fit>
        <Gap $w={3} /><Arrow color="#222" down /><Gap $w={10} />
        <Fit w={136} size={37} color="#f0c222" weight={700}>MA1:65.96<Unit>万</Unit></Fit>
        <Gap $w={3} /><Arrow color="#f0c222" down /><Gap $w={9} />
        <Fit w={138} size={37} color="#d62bd6" weight={700}>MA2:64.24<Unit>万</Unit></Fit>
        <Gap $w={3} /><Arrow color="#d62bd6" down /><Gap $w={9} />
        <Fit w={134} size={37} color="#12a012" weight={700}>MA3:57.79<Unit>万</Unit></Fit>
        <Gap $w={3} /><Arrow color="#12a012" /><Gap $w={10} />
        <Fit w={192} size={36} color="#888">虚拟成交量:77.42万</Fit>
        <CollapseTab>
          <svg width="18" height="28" viewBox="0 0 18 28" fill="none" stroke="#fff" strokeWidth="3.600" strokeLinecap="round"><path d="M15 3 3 14 15 25" /></svg>
        </CollapseTab>
        <Gap $w={12} />
      </Row>

      <VolumeChart />

      <Promo>
        <svg width="44" height="38" viewBox="0 0 44 38" fill="#e85408">
          <path d="M1 12h4v14H1zM10 12 39 3V1h4v36h-4v-3l-8-3-4 3-10-1-1-3-6-2z" />
        </svg>
        <Gap $w={48} />
        <Fit w={252} size={36} color="#e0570c" weight={500} y={-2}>整整一年免费送</Fit>
        <Fit w={36} size={36} color="#e0570c" weight={500} y={-2}>！</Fit>
        <Fit w={396} size={36} color="#e0570c" weight={500} y={-2}>这份新客福利您领取了吗</Fit>
        <Fit w={20} size={38} color="#e0570c" weight={700} y={-2}>?</Fit>
        <Gap $w={141} />
        <svg width="50" height="36" viewBox="0 0 50 36" fill="none" stroke="#e0570c">
          <path d="M2 2V34" strokeWidth="1.400" />
          <path d="M17 4 45 32M45 4 17 32" strokeWidth="3" />
        </svg>
      </Promo>

      <TopRuledRow $h={96} $pl={31} $line="#d4d4d4">
        {["股吧", "盘口", "资讯", "公告", "研报", "财务", "资料"].map((t, i) => (
          <TabItem key={t} $w={145.2}>
            <Fit w={80} size={40} color={i ? "#666" : "#e5580b"} weight={i ? 500 : 700}>{t}</Fit>
            {i === 0 && <Underline />}
          </TabItem>
        ))}
      </TopRuledRow>

      <Cards>
        <Card>
          <CardArt width="494" height="240" viewBox="0 0 494 240">
            <defs><linearGradient id="fade" x2="0" y2="1"><stop stopColor="#fde7e4" /><stop offset="1" stopColor="#fff8f7" /></linearGradient></defs>
            <path d="M287 0H494V240H440L460 22H337L334 75H276V195H241V29H287Z" fill="#fdeeec" opacity=".7" />
            <path d="M361 49H436L441 180H356ZM310 93H345L342 180H306ZM454 115H494V180H456Z" fill="url(#fade)" />
            <path d="M382 98 412 91V133H392V112H382Z" fill="#fff8f7" />
          </CardArt>
          <CardBody>
            <CardLine $h={48}>
              <RankIcon /><Gap $w={11} />
              <Fit w={116} size={38} weight={700}>人气榜</Fit><Gap $w={13} />
              <svg width="16" height="24" viewBox="0 0 16 24" fill="none" stroke="#b5b0b0" strokeWidth="2.600"><path d="M3 2 13 12 3 22" /></svg>
            </CardLine>
            <CardLine $h={84}>
              <Fit w={23} size={35} color="#666">A</Fit>
              <Fit w={197} size={32} color="#666">股市场排名第</Fit>
              <Fit w={60} size={35} color="#dc4d18" weight={700}>108</Fit>
              <Fit w={31} size={32} color="#666">名</Fit>
            </CardLine>
            <CardLine $h={32}>
              <Fit w={97} size={32} color="#666">较昨日</Fit>
              <svg width="24" height="32" viewBox="0 0 24 32"><path d="M12 0 24 14H15V32H9V14H0Z" fill="#e04616" /></svg>
              <Fit w={50} size={35} color="#dc4d18" weight={700}>101</Fit><Gap $w={7} />
              <Fit w={31} size={32} color="#666">名</Fit>
            </CardLine>
          </CardBody>
        </Card>
        <Card>
          <CardArt width="494" height="240" viewBox="0 0 494 240">
            <path d="M254 0H494V240H270Z" fill="#fdefed" opacity=".8" />
            <text x="312" y="152" fontSize="158" fontWeight="900" fontFamily={SANS} fontStyle="italic" fill="#fbe6e4" textLength="170" lengthAdjust="spacingAndGlyphs" stroke="#fff4f2" strokeWidth="30" strokeLinejoin="round" paintOrder="stroke">VS</text>
          </CardArt>
          <CardBody>
            <CardLine $h={48}>
              <VsIcon /><Gap $w={11} />
              <Fit w={155} size={38} weight={700}>多空看盘</Fit>
            </CardLine>
            <Vote>
              <VoteHalf $bg="#fddedb">
                <VoteCircle><svg width="24" height="18" viewBox="0 0 24 18"><path d="M12 3 21 15H3Z" fill="#e04616" stroke="#e04616" strokeWidth="4" strokeLinejoin="round" /></svg></VoteCircle>
                <VoteText>
                  <Fit w={64} size={32} color="#e04616">看涨</Fit>
                  <Fit w={54} size={30} color="#e04616" weight={600}>**%</Fit>
                </VoteText>
              </VoteHalf>
              <VoteHalf $bg="#d6efdd" $right>
                <VoteCircle><svg width="24" height="18" viewBox="0 0 24 18"><path d="M12 15 21 3H3Z" fill="#3fb065" stroke="#3fb065" strokeWidth="4" strokeLinejoin="round" /></svg></VoteCircle>
                <VoteText>
                  <Fit w={64} size={32} color="#3fb065">看跌</Fit>
                  <Fit w={54} size={30} color="#3fb065" weight={600}>**%</Fit>
                </VoteText>
              </VoteHalf>
            </Vote>
          </CardBody>
        </Card>
      </Cards>

      <BottomBar>
        <IndexCell>
          <UpMark />
          <IndexRow $pl={10}><Fit w={187} size={58} color={RED} weight={700}>4141.01</Fit></IndexRow>
          <IndexRow $pl={0} $mt={-3}>
            <Fit w={96} size={47} color="#666" y={-6}>上证</Fit><Gap $w={22} />
            <Fit w={114} size={43} color={RED} weight={600} y={-3}>0.12%</Fit>
          </IndexRow>
        </IndexCell>
        {NAV.map(([t, w, icon]) => (
          <NavItem key={t}>
            <svg width="60" height="58" viewBox="-30 -29 60 58" fill="none" stroke="#666" strokeWidth="2.400">{icon}</svg>
            <Fit w={w} size={48} color="#666">{t}</Fit>
          </NavItem>
        ))}
      </BottomBar>

      <SystemBar>
        <svg width="1080" height="60" viewBox="0 2305 1080 60" fill="none" stroke="#777" strokeWidth="3.600" strokeLinecap="round" strokeLinejoin="round">
          <path d="M279 2320.700H312M279 2335.300H312M279 2350.300H312" />
          <rect x="522.500" y="2318.500" width="34" height="34" rx="8" />
          <path d="M792 2319 776 2335.500 792 2352" strokeWidth="3" />
        </svg>
      </SystemBar>
    </Page>
  );
}
